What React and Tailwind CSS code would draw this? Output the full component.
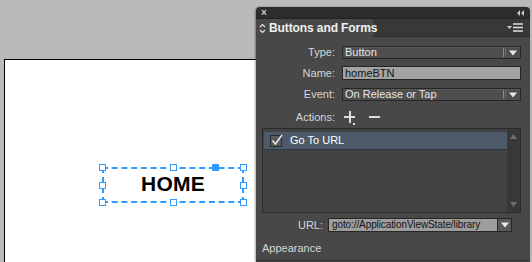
import React from "react";

const F = { fontFamily: '"Liberation Sans", Arial, sans-serif' };

function Handle({ filled, className }) {
  return (
    <div
      className={
        "absolute w-[7px] h-[7px] border border-[#2f9bff] " +
        (filled ? "bg-[#2f9bff] " : "bg-white ") +
        className
      }
    />
  );
}

function Arrow({ className = "" }) {
  return (
    <svg width="8" height="6" viewBox="0 0 8 6" className={className}>
      <path d="M0 0.5 H8 L4 5.5 Z" fill="#e8e8e8" />
    </svg>
  );
}

function Dropdown({ text }) {
  return (
    <div className="flex items-center h-[13px] w-[179px] bg-[#4e4e4e] border border-[#262626] shadow-[inset_0_1px_0_#5a5a5a]">
      <span className="pl-[2px] text-[11px] leading-none text-[#e6e6e6] flex-1 whitespace-nowrap">{text}</span>
      <div className="h-[9px] w-px bg-[#8a8a8a]" />
      <div className="h-[9px] w-px bg-[#6a6a6a] ml-px" />
      <Arrow className="ml-[3px] mr-[3px]" />
    </div>
  );
}

export default function App() {
  return (
    <div
      className="w-[532px] h-[262px] bg-[#bababa] flex overflow-hidden"
      style={F}
    >
      {/* Canvas page */}
      <div className="w-[256px] pt-[59px] pl-[4px] shrink-0">
        <div className="relative h-[210px] w-[260px] bg-white border-t border-l border-black">
          <div className="absolute left-[97px] top-[107px] w-[142px] h-[36px] border-2 border-dashed border-[#2f9bff] flex items-center justify-center">
            <span className="text-[21px] font-bold text-black leading-none tracking-[0.2px] -mt-[3px]">
              HOME
            </span>
            <Handle className="left-[-5px] top-[-5px]" />
            <Handle className="left-[66px] top-[-5px]" />
            <Handle filled className="left-[108px] top-[-5px]" />
            <Handle className="right-[-5px] top-[-5px]" />
            <Handle className="left-[-5px] top-[13px]" />
            <Handle className="right-[-5px] top-[13px]" />
            <Handle className="left-[-5px] bottom-[-5px]" />
            <Handle className="left-[66px] bottom-[-5px]" />
            <Handle className="right-[-5px] bottom-[-5px]" />
          </div>
        </div>
      </div>

      {/* Panel */}
      <div className="w-[274px] mt-[7px] shrink-0 flex flex-col rounded-t-[4px] overflow-hidden shadow-[-1px_0_2px_rgba(0,0,0,0.35)] relative z-10">
        {/* title bar */}
        <div className="h-[12px] bg-[#2c2c2c] flex items-center justify-between pl-[5px] pr-[6px] border-b border-[#222]">
          <span className="text-[10px] leading-none text-[#c8c8c8] font-bold">×</span>
          <svg width="7" height="6" viewBox="0 0 7 6">
            <path d="M3 0 V6 L0 3 Z M7 0 V6 L4 3 Z" fill="#c8c8c8" />
          </svg>
        </div>
        {/* tab row */}
        <div className="h-[18px] bg-[#383838] flex items-stretch border-b border-[#2a2a2a]">
          <div className="w-[117px] bg-[#484848] flex items-center pl-[3px] gap-[3px] -mb-px">
            <svg width="7" height="11" viewBox="0 0 7 11" className="shrink-0">
              <path d="M1 4 L3.5 1.5 L6 4 M1 7 L3.5 9.5 L6 7" stroke="#e0e0e0" strokeWidth="1.2" fill="none" />
            </svg>
            <span className="text-[12px] font-bold text-[#f0f0f0] leading-none whitespace-nowrap tracking-[-0.1px]">Buttons and Forms</span>
          </div>
          <div className="flex-1 flex items-center justify-end pr-[7px] gap-[1px]">
            <svg width="5" height="3" viewBox="0 0 5 3">
              <path d="M0 0 H5 L2.5 3 Z" fill="#d0d0d0" />
            </svg>
            <svg width="10" height="9" viewBox="0 0 10 9">
              <path d="M0 1 H10 M0 4.5 H10 M0 8 H10" stroke="#e0e0e0" strokeWidth="1.3" />
            </svg>
          </div>
        </div>

        {/* body */}
        <div className="flex-1 bg-[#484848] flex flex-col pl-[6px] pr-[9px] pt-[9px] text-[11px] text-[#d6d6d6]">
          <div className="flex items-center">
            <span className="w-[73px] text-right leading-none">Type:</span>
            <div className="ml-[7px]">
              <Dropdown text="Button" />
            </div>
          </div>
          <div className="flex items-center mt-[7px]">
            <span className="w-[73px] text-right leading-none">Name:</span>
            <div className="ml-[7px] h-[14px] w-[179px] bg-[#a3a3a3] border border-[#262626] flex items-center pl-[2px]">
              <span className="leading-none text-[#141414]">homeBTN</span>
            </div>
          </div>
          <div className="flex items-center mt-[8px]">
            <span className="w-[73px] text-right leading-none">Event:</span>
            <div className="ml-[7px]">
              <Dropdown text="On Release or Tap" />
            </div>
          </div>
          <div className="flex items-center mt-[8px] h-[16px]">
            <span className="w-[73px] text-right leading-none">Actions:</span>
            <div className="ml-[9px] relative w-[12px] h-[12px]">
              <div className="absolute left-0 top-[5px] w-[11px] h-[2px] bg-[#dcdcdc]" />
              <div className="absolute left-[4.5px] top-0 w-[2px] h-[12px] bg-[#dcdcdc]" />
              <div className="absolute left-[9px] top-[12px] w-[2px] h-[2px] bg-[#dcdcdc]" />
            </div>
            <div className="ml-[13px] w-[11px] h-[2px] bg-[#dcdcdc]" />
          </div>

          {/* list */}
          <div className="mt-[3px] h-[85px] w-[259px] border border-[#2a2a2a] bg-[#434343] flex">
            <div className="flex-1 pt-[3px] pl-[1px]">
              <div className="h-[18px] bg-[#4c5a69] border-b border-[#2f3740] flex items-center pl-[6px]">
                <div className="w-[12px] h-[12px] bg-[#5a5a5a] border border-[#2a2a2a] relative">
                  <svg width="12" height="12" viewBox="0 0 12 12" className="absolute left-[0px] top-[-2px]">
                    <path d="M1.5 6.5 L4.5 10 L11 1" stroke="#f0f0f0" strokeWidth="1.4" fill="none" />
                  </svg>
                </div>
                <span className="ml-[8px] text-white leading-none">Go To URL</span>
              </div>
            </div>
            <div className="w-[13px] bg-[#383838] flex flex-col items-center justify-between py-[5px]">
              <svg width="7" height="5" viewBox="0 0 7 5">
                <path d="M0 5 H7 L3.5 0 Z" fill="#6e6e6e" />
              </svg>
              <svg width="7" height="5" viewBox="0 0 7 5">
                <path d="M0 0 H7 L3.5 5 Z" fill="#6e6e6e" />
              </svg>
            </div>
          </div>

          {/* URL */}
          <div className="flex items-center mt-[5px]">
            <span className="w-[61px] text-right leading-none">URL:</span>
            <div className="ml-[5px] h-[14px] w-[170px] bg-[#9d9d9d] border border-[#262626] flex items-center pl-[3px]">
              <span className="leading-none text-[#141414] text-[10px] tracking-[-0.1px] whitespace-nowrap">goto://ApplicationViewState/library</span>
            </div>
            <div className="h-[14px] w-[14px] bg-[#5a5a5a] border border-[#262626] border-l-0 flex items-center justify-center">
              <Arrow />
            </div>
          </div>

          <div className="mt-[11px] leading-none text-[#d6d6d6]">Appearance</div>
          <div className="mt-[6px] -ml-[6px] -mr-[9px] h-px bg-[#333]" />
        </div>
      </div>
    </div>
  );
}
